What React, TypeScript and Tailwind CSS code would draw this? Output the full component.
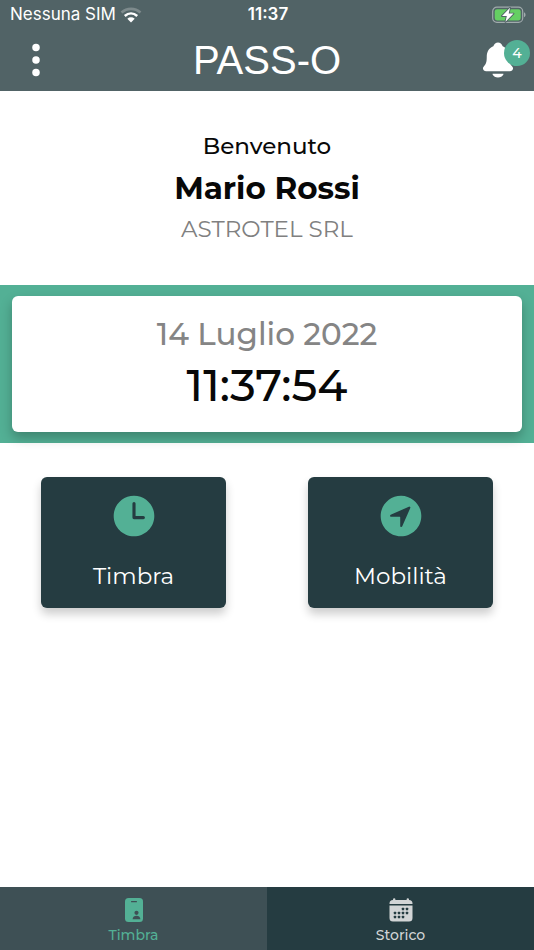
import { useState } from "react";
import { IoEllipsisVertical, IoNavigateCircle, IoNotifications, IoTime } from "react-icons/io5";

const actions = [
  { label: "Timbra", icon: IoTime },
  { label: "Mobilità", icon: IoNavigateCircle },
];

const tabs = [
  { label: "Timbra", icon: BadgeIcon },
  { label: "Storico", icon: CalendarIcon },
];

function WifiIcon() {
  return (
    <svg viewBox="0 0 22 16" className="w-[22px] h-4" fill="none" aria-hidden="true">
      <path d="M1.500 5.500C7 .6 15 .6 20.500 5.500" stroke="#7d8a8c" strokeWidth="2.600" />
      <path d="M4.800 8.900C8.500 5.700 13.500 5.700 17.200 8.900" stroke="#fff" strokeWidth="2.600" />
      <path d="M7.300 11.700C9.500 9.900 12.500 9.900 14.700 11.700L11 15.400Z" fill="#fff" />
    </svg>
  );
}

function BatteryIcon() {
  return (
    <svg viewBox="0 0 34 18" className="w-[34px] h-[18px]" aria-hidden="true">
      <rect x="0.700" y="1.200" width="30" height="15.200" rx="4.200" fill="none" stroke="#a1abad" strokeWidth="1.200" />
      <rect x="2.700" y="3.200" width="26" height="11.200" rx="2.300" fill="#65cf63" />
      <path d="M32 6.300C34 7 34 10.600 32 11.300Z" fill="#a1abad" />
      <path
        d="M18 1.800L10 10H14.800L13.500 15.800L21.500 7.600H16.700Z"
        fill="#fff"
        stroke="#516366"
        strokeWidth="1.800"
        strokeLinejoin="round"
        paintOrder="stroke"
      />
    </svg>
  );
}

function BadgeIcon() {
  return (
    <svg viewBox="0 0 24 26" className="w-6 h-[26px]" aria-hidden="true">
      <rect x="3" y="1" width="18" height="24" rx="3.500" fill="currentColor" />
      <g className="fill-[#3e5055]">
        <rect x="9" y="4" width="6" height="1.300" rx="0.600" />
        <circle cx="14.500" cy="15.800" r="2.100" />
        <path d="M10.600 22.200C10.600 17.700 18.400 17.700 18.400 22.200Z" />
      </g>
    </svg>
  );
}

const calendarDots = [
  [15, 12], [19, 12],
  [7, 16], [11, 16], [15, 16], [19, 16],
  [7, 20], [11, 20], [15, 20],
];

function CalendarIcon() {
  return (
    <svg viewBox="0 0 26 26" className="w-[26px] h-[26px]" aria-hidden="true">
      <path
        d="M5 3V2.500a1.200 1.200 0 0 1 2.400 0V3h11.200v-.5a1.200 1.200 0 0 1 2.400 0V3a3.500 3.500 0 0 1 3.500 3.500V7h-23v-.5A3.500 3.500 0 0 1 5 3Z"
        fill="currentColor"
      />
      <path d="M1.500 8.500h23v12.500a3.500 3.500 0 0 1-3.500 3.500H5a3.500 3.500 0 0 1-3.500-3.500Z" fill="currentColor" />
      {calendarDots.map(([x, y]) => (
        <rect key={`${x}-${y}`} x={x - 1.2} y={y - 1.2} width="2.400" height="2.400" rx="0.500" fill="#253c41" />
      ))}
    </svg>
  );
}

export default function App() {
  const [active, setActive] = useState(0);

  return (
    <div className="flex min-h-screen flex-col bg-white font-['Montserrat','Inter',sans-serif] font-medium text-[#080808]">
      <header className="bg-[#516366] text-white">
        <div className="grid h-[30px] grid-cols-[1fr_auto_1fr] items-center pl-[10px] pr-2 font-['Inter',sans-serif] text-[17px]">
          <div className="flex items-center gap-1 font-normal">
            <span>Nessuna SIM</span>
            <WifiIcon />
          </div>
          <span className="font-semibold">11:37</span>
          <div className="flex justify-end">
            <BatteryIcon />
          </div>
        </div>
        <div className="grid grid-cols-[1fr_auto_1fr] items-center px-4 pb-[11px] pt-[10px]">
          <button type="button" aria-label="Menu" className="w-10">
            <IoEllipsisVertical className="h-10 w-10" />
          </button>
          <h1 className="font-['Liberation_Sans',sans-serif] text-[40px] font-normal leading-none">PASS-O</h1>
          <button type="button" aria-label="Notifiche" className="relative justify-self-end">
            <IoNotifications className="h-10 w-10" />
            <span className="absolute -right-3 top-0 flex h-[26px] w-[26px] items-center justify-center rounded-full bg-[#53b095] text-sm">
              4
            </span>
          </button>
        </div>
      </header>

      <main className="flex-1">
        <section className="flex flex-col items-center pb-[38px] pt-9 text-center">
          <p className="text-[23px] leading-[38px]">Benvenuto</p>
          <h2 className="text-[31px] font-bold leading-[46px]">Mario Rossi</h2>
          <p className="text-[23px] font-normal leading-9 text-[#808080]">ASTROTEL SRL</p>
        </section>

        <section className="bg-[#53b095] px-3 py-[11px]">
          <div className="flex flex-col items-center rounded-md bg-white pb-[18px] pt-4 text-center shadow-[0_6px_12px_rgba(0,0,0,0.25)]">
            <p className="text-[31px] leading-[44px] text-[#858585]">14 Luglio 2022</p>
            <time className="text-[45px] leading-[58px]">11:37:54</time>
          </div>
        </section>

        <section className="grid grid-cols-2 pt-[34px]">
          {actions.map(({ label, icon: Icon }) => (
            <button
              key={label}
              type="button"
              className="mx-[41px] flex h-[131px] flex-col items-center rounded-md bg-[#253c41] pt-[14px] text-white shadow-[0_6px_10px_rgba(0,0,0,0.2)]"
            >
              <Icon className="h-[50px] w-[50px] text-[#53b095]" />
              <span className="mt-[18px] text-[23px] font-normal leading-[34px]">{label}</span>
            </button>
          ))}
        </section>
      </main>

      <nav className="grid grid-cols-2">
        {tabs.map(({ label, icon: Icon }, index) => (
          <button
            key={label}
            type="button"
            onClick={() => setActive(index)}
            className={`flex h-[63px] flex-col items-center pt-[10px] ${
              active === index ? "bg-[#3e5055] text-[#53b095]" : "bg-[#253c41] text-[#d2d5d6]"
            }`}
          >
            <Icon />
            <span className="text-sm leading-6">{label}</span>
          </button>
        ))}
      </nav>
    </div>
  );
}
